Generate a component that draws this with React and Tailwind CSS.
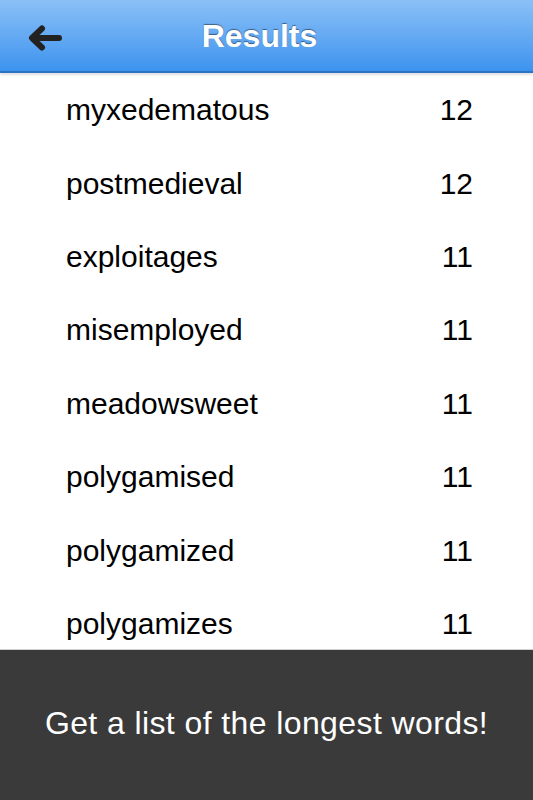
import React from "react";

const results = [
  { word: "myxedematous", len: 12 },
  { word: "postmedieval", len: 12 },
  { word: "exploitages", len: 11 },
  { word: "misemployed", len: 11 },
  { word: "meadowsweet", len: 11 },
  { word: "polygamised", len: 11 },
  { word: "polygamized", len: 11 },
  { word: "polygamizes", len: 11 },
];

const BackArrow = () => (
  <svg width="34" height="26" viewBox="0 0 34 26" fill="none">
    <path
      d="M31 13H5M14 3.5L4 13L14 22.5"
      stroke="#222"
      strokeWidth="6"
      strokeLinecap="round"
      strokeLinejoin="round"
    />
  </svg>
);

export default function App() {
  return (
    <div className="flex h-[800px] w-[533px] flex-col overflow-hidden bg-white font-['Liberation_Sans',Arial,sans-serif]">
      {/* top bar */}
      <header className="relative z-10 flex h-[73px] shrink-0 items-center border-b-2 border-[#2c73c4] bg-gradient-to-b from-[#8ac0f7] to-[#3b93ee] shadow-[0_2px_2px_rgba(0,0,0,0.12)]">
        <button className="ml-[27px] flex h-[40px] w-[36px] items-center justify-center pt-[4px]">
          <BackArrow />
        </button>
        <h1 className="pointer-events-none absolute left-0 right-0 pr-[14px] text-center text-[32px] font-bold text-white [text-shadow:0_-1px_1px_rgba(0,0,0,0.45)]">
          Results
        </h1>
      </header>

      {/* word list */}
      <main className="flex-1 overflow-hidden">
        {results.map((r) => (
          <div
            key={r.word}
            className="flex h-[73.4px] items-center justify-between pl-[66px] pr-[60px] text-[30px] text-black"
          >
            <span>{r.word}</span>
            <span>{r.len}</span>
          </div>
        ))}
      </main>

      {/* footer */}
      <footer className="flex h-[151px] shrink-0 items-center justify-center border-t border-[#cfcfcf] bg-[#3a3a3a] pb-[5px]">
        <p className="text-[32px] tracking-[0.4px] text-white">Get a list of the longest words!</p>
      </footer>
    </div>
  );
}
